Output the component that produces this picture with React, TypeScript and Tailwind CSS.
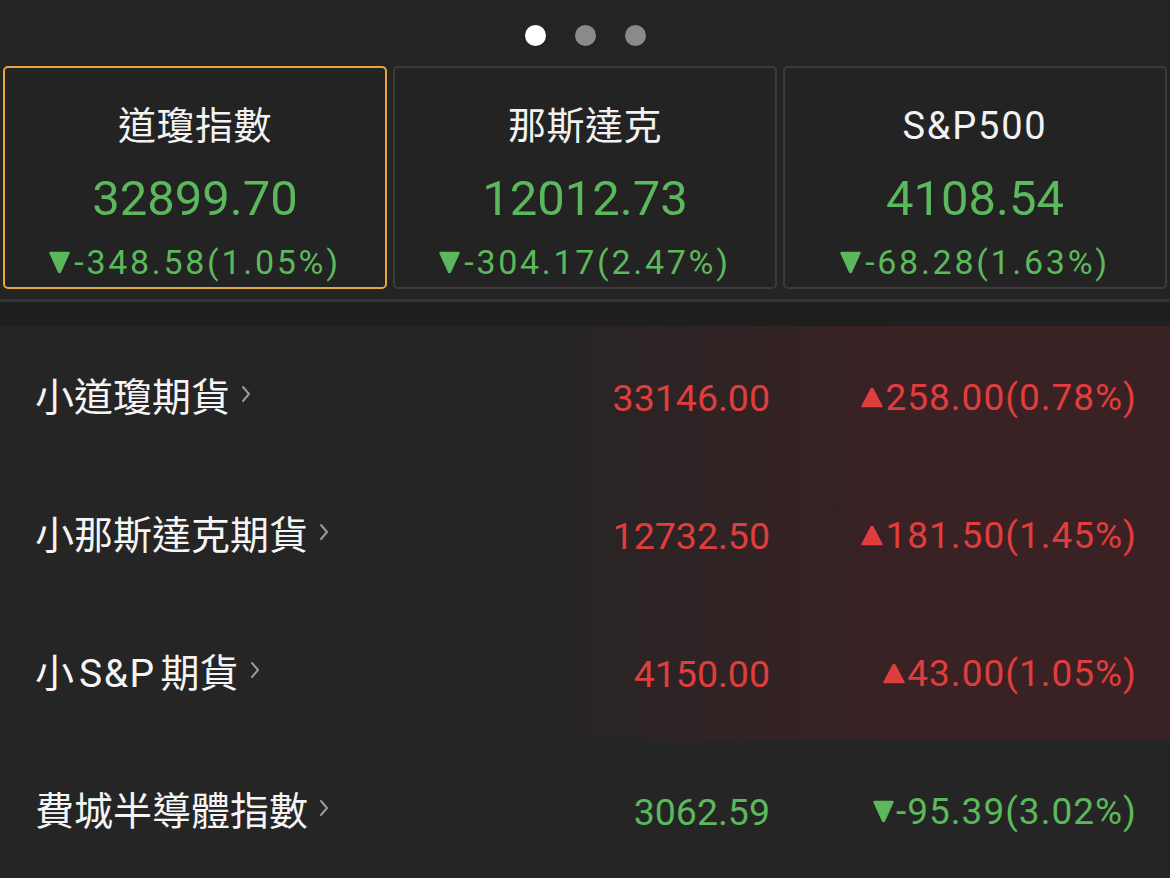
import React from "react";

const GREEN = "#5cb85c";
const RED = "#e03d3d";

function Tri({ up, color, cls }: { up: boolean; color: string; cls: string }) {
  return (
    <svg viewBox="0 0 20 22" className={`shrink-0 ${cls}`} preserveAspectRatio="none">
      {up ? (
        <path d="M10 0.8 Q11 0.8 11.6 2 L19.6 19.6 Q20.2 21.2 18.4 21.2 L1.6 21.2 Q-0.2 21.2 0.4 19.6 L8.4 2 Q9 0.8 10 0.8 Z" fill={color} />
      ) : (
        <path d="M10 21.2 Q11 21.2 11.6 20 L19.6 2.4 Q20.2 0.8 18.4 0.8 L1.6 0.8 Q-0.2 0.8 0.4 2.4 L8.4 20 Q9 21.2 10 21.2 Z" fill={color} />
      )}
    </svg>
  );
}

function Chevron() {
  return (
    <svg viewBox="0 0 10 20" className="shrink-0 w-[10px] h-[20px]">
      <path d="M2 3 L8 10 L2 17" fill="none" stroke="#9a9a9a" strokeWidth="2" strokeLinecap="round" strokeLinejoin="round" />
    </svg>
  );
}

const cards = [
  { name: "道瓊指數", value: "32899.70", change: "-348.58(1.05%)", active: true, latin: false },
  { name: "那斯達克", value: "12012.73", change: "-304.17(2.47%)", active: false, latin: false },
  { name: "S&P500", value: "4108.54", change: "-68.28(1.63%)", active: false, latin: true },
];

const rows = [
  { name: ["小道瓊期貨"], price: "33146.00", change: "258.00(0.78%)", up: true },
  { name: ["小那斯達克期貨"], price: "12732.50", change: "181.50(1.45%)", up: true },
  { name: ["小", "S&P", "期貨"], price: "4150.00", change: "43.00(1.05%)", up: true },
  { name: ["費城半導體指數"], price: "3062.59", change: "-95.39(3.02%)", up: false },
];

export default function App() {
  return (
    <div className="w-[1170px] h-[878px] overflow-hidden bg-[#252525] text-[#f2f2f2] font-['Roboto','Noto_Sans_CJK_TC',sans-serif]">
      <div className="bg-[#242424]">
        <div className="flex justify-center gap-[29px] pt-[25px]">
          <div className="w-[21px] h-[21px] rounded-full bg-white" />
          <div className="w-[21px] h-[21px] rounded-full bg-[#8a8a8a]" />
          <div className="w-[21px] h-[21px] rounded-full bg-[#8a8a8a]" />
        </div>
        <div className="flex gap-[6px] px-[3px] mt-[20px]">
          {cards.map((c) => (
            <div
              key={c.name}
              className={`w-[384px] h-[223px] rounded-[5px] border-2 flex flex-col items-center bg-[#232323] ${
                c.active ? "border-[#e9a53c]" : "border-[#3b3b3b]"
              }`}
            >
              <div
                className={`mt-[35px] h-[46px] leading-[46px] text-[38px] ${
                  c.latin ? "tracking-[1.8px]" : "tracking-[0.5px]"
                }`}
              >
                {c.name}
              </div>
              <div className="mt-[22px] h-[56px] leading-[56px] text-[49px]" style={{ color: GREEN }}>
                {c.value}
              </div>
              <div className="mt-[15px] h-[40px] flex items-center gap-[4px]" style={{ color: GREEN }}>
                <Tri up={false} color={GREEN} cls="w-[21px] h-[23px]" />
                <span className="text-[34px] leading-[40px] tracking-[2.7px]">{c.change}</span>
              </div>
            </div>
          ))}
        </div>
        <div className="h-[10px]" />
      </div>
      <div className="h-[3px] bg-[#323232]" />
      <div className="h-[24px] bg-[#1f1f1f]" />
      <div className="flex flex-col">
        {rows.map((r, i) => {
          const color = r.up ? RED : GREEN;
          return (
            <div
              key={i}
              className={`h-[138px] flex items-center pr-[33px] pt-[5px] ${
                r.up ? "bg-[linear-gradient(to_right,#252525_45%,#3a2124_78%)]" : ""
              }`}
            >
              <div className="flex-1 pl-[35px] flex items-center gap-[11px]">
                <span className="text-[39px] leading-[46px] text-[#f5f5f5]">
                  {r.name.length === 1 ? (
                    r.name[0]
                  ) : (
                    <>
                      {r.name[0]}
                      <span className="mx-[5px] tracking-[1.5px]">{r.name[1]}</span>
                      {r.name[2]}
                    </>
                  )}
                </span>
                <span className="-mt-[8px]">
                  <Chevron />
                </span>
              </div>
              <div className="w-[240px] text-right text-[37.5px] leading-[46px]" style={{ color }}>
                {r.price}
              </div>
              <div className="w-[367px] flex justify-end items-center gap-[2px]" style={{ color }}>
                <Tri up={r.up} color={color} cls={r.up ? "w-[22px] h-[21px]" : "w-[21px] h-[23px]"} />
                <span className="text-[37px] leading-[46px] tracking-[1px]">{r.change}</span>
              </div>
            </div>
          );
        })}
      </div>
    </div>
  );
}
